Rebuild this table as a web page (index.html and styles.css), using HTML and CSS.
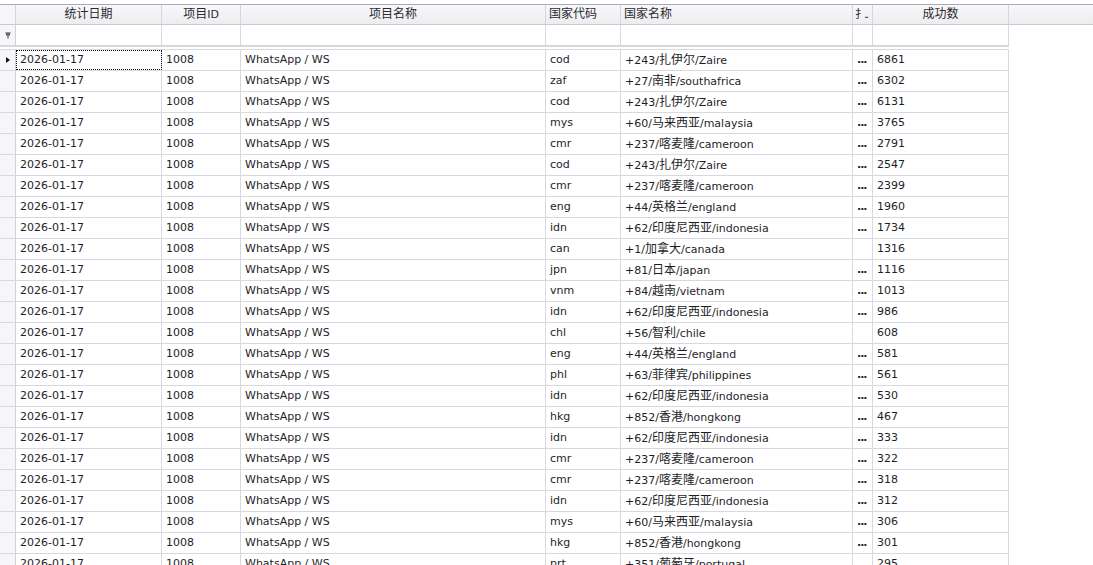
FILE: index.html
```html
<!DOCTYPE html>
<html>
<head>
<meta charset="utf-8">
<link rel="stylesheet" href="styles.css">
</head>
<body>
<div class="grid">
  <div class="hdr">
    <div class="h ind"></div>
    <div class="h center">统计日期</div>
    <div class="h center">项目<span class="lat">ID</span></div>
    <div class="h center">项目名称</div>
    <div class="h">国家代码</div>
    <div class="h">国家名称</div>
    <div class="h clip">扌<span class="dots">..</span></div>
    <div class="h center">成功数</div>
    <div class="h fill"></div>
  </div>
  <div class="frow">
    <div class="ind"><svg width="6" height="7" viewBox="0 0 6 7"><rect x="0.5" y="0.5" width="5" height="1" fill="#333"/><rect x="1" y="1.5" width="4" height="2" fill="#555"/><rect x="2.5" y="3.5" width="1" height="3" fill="#333"/></svg></div>
    <div class="c"></div><div class="c"></div><div class="c"></div><div class="c"></div><div class="c"></div><div class="c"></div><div class="c"></div>
  </div>
  <div class="body">
    <div class="row"><div class="ind"><span class="arrow"></span></div><div class="c focus">2026-01-17</div><div class="c">1008</div><div class="c">WhatsApp / WS</div><div class="c">cod</div><div class="c">+243/<span class="zh">扎伊尔</span>/Zaire</div><div class="c dots">...</div><div class="c">6861</div></div>
    <div class="row"><div class="ind"></div><div class="c">2026-01-17</div><div class="c">1008</div><div class="c">WhatsApp / WS</div><div class="c">zaf</div><div class="c">+27/<span class="zh">南非</span>/southafrica</div><div class="c dots">...</div><div class="c">6302</div></div>
    <div class="row"><div class="ind"></div><div class="c">2026-01-17</div><div class="c">1008</div><div class="c">WhatsApp / WS</div><div class="c">cod</div><div class="c">+243/<span class="zh">扎伊尔</span>/Zaire</div><div class="c dots">...</div><div class="c">6131</div></div>
    <div class="row"><div class="ind"></div><div class="c">2026-01-17</div><div class="c">1008</div><div class="c">WhatsApp / WS</div><div class="c">mys</div><div class="c">+60/<span class="zh">马来西亚</span>/malaysia</div><div class="c dots">...</div><div class="c">3765</div></div>
    <div class="row"><div class="ind"></div><div class="c">2026-01-17</div><div class="c">1008</div><div class="c">WhatsApp / WS</div><div class="c">cmr</div><div class="c">+237/<span class="zh">喀麦隆</span>/cameroon</div><div class="c dots">...</div><div class="c">2791</div></div>
    <div class="row"><div class="ind"></div><div class="c">2026-01-17</div><div class="c">1008</div><div class="c">WhatsApp / WS</div><div class="c">cod</div><div class="c">+243/<span class="zh">扎伊尔</span>/Zaire</div><div class="c dots">...</div><div class="c">2547</div></div>
    <div class="row"><div class="ind"></div><div class="c">2026-01-17</div><div class="c">1008</div><div class="c">WhatsApp / WS</div><div class="c">cmr</div><div class="c">+237/<span class="zh">喀麦隆</span>/cameroon</div><div class="c dots">...</div><div class="c">2399</div></div>
    <div class="row"><div class="ind"></div><div class="c">2026-01-17</div><div class="c">1008</div><div class="c">WhatsApp / WS</div><div class="c">eng</div><div class="c">+44/<span class="zh">英格兰</span>/england</div><div class="c dots">...</div><div class="c">1960</div></div>
    <div class="row"><div class="ind"></div><div class="c">2026-01-17</div><div class="c">1008</div><div class="c">WhatsApp / WS</div><div class="c">idn</div><div class="c">+62/<span class="zh">印度尼西亚</span>/indonesia</div><div class="c dots">...</div><div class="c">1734</div></div>
    <div class="row"><div class="ind"></div><div class="c">2026-01-17</div><div class="c">1008</div><div class="c">WhatsApp / WS</div><div class="c">can</div><div class="c">+1/<span class="zh">加拿大</span>/canada</div><div class="c dots"></div><div class="c">1316</div></div>
    <div class="row"><div class="ind"></div><div class="c">2026-01-17</div><div class="c">1008</div><div class="c">WhatsApp / WS</div><div class="c">jpn</div><div class="c">+81/<span class="zh">日本</span>/japan</div><div class="c dots">...</div><div class="c">1116</div></div>
    <div class="row"><div class="ind"></div><div class="c">2026-01-17</div><div class="c">1008</div><div class="c">WhatsApp / WS</div><div class="c">vnm</div><div class="c">+84/<span class="zh">越南</span>/vietnam</div><div class="c dots">...</div><div class="c">1013</div></div>
    <div class="row"><div class="ind"></div><div class="c">2026-01-17</div><div class="c">1008</div><div class="c">WhatsApp / WS</div><div class="c">idn</div><div class="c">+62/<span class="zh">印度尼西亚</span>/indonesia</div><div class="c dots">...</div><div class="c">986</div></div>
    <div class="row"><div class="ind"></div><div class="c">2026-01-17</div><div class="c">1008</div><div class="c">WhatsApp / WS</div><div class="c">chl</div><div class="c">+56/<span class="zh">智利</span>/chile</div><div class="c dots"></div><div class="c">608</div></div>
    <div class="row"><div class="ind"></div><div class="c">2026-01-17</div><div class="c">1008</div><div class="c">WhatsApp / WS</div><div class="c">eng</div><div class="c">+44/<span class="zh">英格兰</span>/england</div><div class="c dots">...</div><div class="c">581</div></div>
    <div class="row"><div class="ind"></div><div class="c">2026-01-17</div><div class="c">1008</div><div class="c">WhatsApp / WS</div><div class="c">phl</div><div class="c">+63/<span class="zh">菲律宾</span>/philippines</div><div class="c dots">...</div><div class="c">561</div></div>
    <div class="row"><div class="ind"></div><div class="c">2026-01-17</div><div class="c">1008</div><div class="c">WhatsApp / WS</div><div class="c">idn</div><div class="c">+62/<span class="zh">印度尼西亚</span>/indonesia</div><div class="c dots">...</div><div class="c">530</div></div>
    <div class="row"><div class="ind"></div><div class="c">2026-01-17</div><div class="c">1008</div><div class="c">WhatsApp / WS</div><div class="c">hkg</div><div class="c">+852/<span class="zh">香港</span>/hongkong</div><div class="c dots">...</div><div class="c">467</div></div>
    <div class="row"><div class="ind"></div><div class="c">2026-01-17</div><div class="c">1008</div><div class="c">WhatsApp / WS</div><div class="c">idn</div><div class="c">+62/<span class="zh">印度尼西亚</span>/indonesia</div><div class="c dots">...</div><div class="c">333</div></div>
    <div class="row"><div class="ind"></div><div class="c">2026-01-17</div><div class="c">1008</div><div class="c">WhatsApp / WS</div><div class="c">cmr</div><div class="c">+237/<span class="zh">喀麦隆</span>/cameroon</div><div class="c dots">...</div><div class="c">322</div></div>
    <div class="row"><div class="ind"></div><div class="c">2026-01-17</div><div class="c">1008</div><div class="c">WhatsApp / WS</div><div class="c">cmr</div><div class="c">+237/<span class="zh">喀麦隆</span>/cameroon</div><div class="c dots">...</div><div class="c">318</div></div>
    <div class="row"><div class="ind"></div><div class="c">2026-01-17</div><div class="c">1008</div><div class="c">WhatsApp / WS</div><div class="c">idn</div><div class="c">+62/<span class="zh">印度尼西亚</span>/indonesia</div><div class="c dots">...</div><div class="c">312</div></div>
    <div class="row"><div class="ind"></div><div class="c">2026-01-17</div><div class="c">1008</div><div class="c">WhatsApp / WS</div><div class="c">mys</div><div class="c">+60/<span class="zh">马来西亚</span>/malaysia</div><div class="c dots">...</div><div class="c">306</div></div>
    <div class="row"><div class="ind"></div><div class="c">2026-01-17</div><div class="c">1008</div><div class="c">WhatsApp / WS</div><div class="c">hkg</div><div class="c">+852/<span class="zh">香港</span>/hongkong</div><div class="c dots">...</div><div class="c">301</div></div>
    <div class="row"><div class="ind"></div><div class="c">2026-01-17</div><div class="c">1008</div><div class="c">WhatsApp / WS</div><div class="c">prt</div><div class="c">+351/<span class="zh">葡萄牙</span>/portugal</div><div class="c dots"></div><div class="c">295</div></div>
  </div>
</div>
</body>
</html>
```

FILE: styles.css
```css
html, body {
  margin: 0;
  padding: 0;
  background: #ffffff;
  overflow: hidden;
}
body {
  font-family: "DejaVu Sans", "Noto Sans CJK SC", sans-serif;
  font-size: 11px;
  color: #1e1e28;
}
.grid {
  padding-top: 4px;
  width: 1093px;
  height: 561px;
  overflow: hidden;
}
.hdr {
  display: grid;
  grid-template-columns: 16px 146px 79px 305px 75px 232px 20px 136px 1fr;
  height: 21px;
  border-top: 1px solid #a9a9b8;
  border-bottom: 1px solid #c9c9d3;
  background: linear-gradient(#f8f8fa, #ededf0);
  box-sizing: border-box;
}
.hdr .h {
  border-right: 1px solid #d6d6de;
  line-height: 19px;
  padding-left: 3px;
  font-size: 12px;
  color: #2a2a30;
  white-space: nowrap;
  overflow: hidden;
}
.hdr .h.center { text-align: center; padding-left: 0; }
.hdr .h.fill { border-right: none; }
.hdr .h.ind { padding: 0; }
.hdr .h.clip { padding-left: 2px; font-size: 11px; letter-spacing: -2px; }
.hdr .h.clip .dots { color: #333; }
.lat { font-size: 11px; }

.frow, .row {
  display: grid;
  grid-template-columns: 16px 146px 79px 305px 75px 232px 20px 136px;
  width: 1009px;
}
.frow {
  height: 22px;
  border-bottom: 2px solid #d6d6de;
  box-sizing: border-box;
  margin-bottom: 2px;
}
.frow .c, .row .c {
  border-right: 1px solid #d8d8e0;
}
.ind {
  background: #f6f6f8;
  border-right: 1px solid #d0d0d8;
  display: flex;
  align-items: center;
  justify-content: center;
}
.frow .ind svg { margin-top: 1px; }
.body {
  border-top: 1px solid #d8d8e0;
  width: 1009px;
}
.row {
  height: 21px;
  border-bottom: 1px solid #d8d8e0;
  box-sizing: border-box;
  line-height: 20px;
}
.row .c {
  padding-left: 4px;
  white-space: nowrap;
  overflow: hidden;
}
.row .c.dots {
  padding-left: 4px;
  font-weight: bold;
  letter-spacing: -1px;
  color: #222;
}
.zh { font-size: 12px; }
.arrow {
  width: 0;
  height: 0;
  border-top: 3px solid transparent;
  border-bottom: 3px solid transparent;
  border-left: 4px solid #111;
  margin-left: 1px;
}
.row .c.focus {
  outline: 1px dotted #111;
  outline-offset: -1px;
}
```
